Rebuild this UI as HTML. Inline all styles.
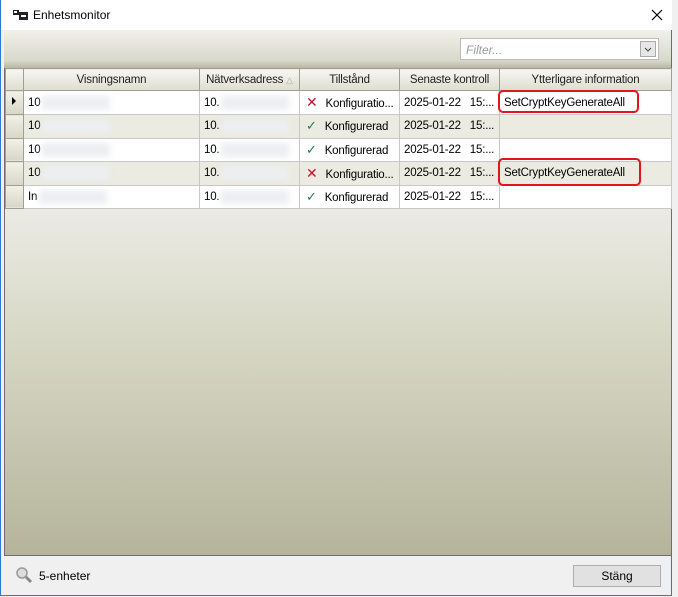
<!DOCTYPE html>
<html><head><meta charset="utf-8"><style>
*{margin:0;padding:0;box-sizing:border-box}
body{width:678px;height:597px;background:#f0f0f0;font-family:"Liberation Sans",sans-serif;font-size:12px;position:relative;overflow:hidden}
#win{position:absolute;left:0;top:0;width:672px;height:596px;border:1px solid #2b79d0;border-top:none;background:#f0f0f0}
#title{position:absolute;left:0;top:0;width:671px;height:30px;background:#fff}
#title .t{position:absolute;left:32px;top:8px;font-size:12px;color:#000}
#tb{position:absolute;left:3px;top:30px;width:667px;height:38px;background:linear-gradient(#f2f1ea,#d9d8cc 80%,#b8b7a5)}
#filter{position:absolute;left:459px;top:38px;width:199px;height:22px;background:#fff;border:1px solid #bbb}
#filter i{position:absolute;left:5px;top:4px;color:#999;font-style:italic;font-size:12px}
#filter b{position:absolute;right:2px;top:2px;width:16px;height:16px;background:#e6e6e6;border:1px solid #aaa}
#grid{position:absolute;left:3px;top:68px;width:668px;height:488px;border:1px solid #6e6e6e;border-top:none;background:linear-gradient(#ebebe4 140px,#d9d9c8 260px,#b5b49b)}
table{border-collapse:collapse;position:absolute;left:0;top:0;table-layout:fixed;width:666px}
td,th{height:23.5px;border:1px solid #c8c8c8;white-space:nowrap;overflow:hidden;font-weight:normal;padding:0 4px;font-size:11.5px;letter-spacing:-0.2px}
th{height:22px;background:linear-gradient(#f7f7f2,#deddd0);border-color:#a0a090;text-align:center;color:#222}
td.rh{background:linear-gradient(#f2f1e8,#d8d6c6);border-color:#a0a090;padding:0}
tr.a td{background:#fff}tr.b td{background:#ebebe1}
tr td.rh{background:linear-gradient(#f2f1e8,#d8d6c6)}
.blur{display:inline-block;width:68px;height:14px;background:#eceef1;filter:blur(3px);vertical-align:middle;margin-left:2px}
.x{color:#c8102e;font-size:14px;margin:0 8px 0 2px}
.c{color:#1e7a50;font-size:13px;margin:0 8px 0 2px}
.red{position:absolute;border:2px solid #e2141e;border-radius:5px}
#foot{position:absolute;left:38px;top:569px;font-size:12px}
#btn{position:absolute;left:572px;top:565px;width:88px;height:22px;background:#e1e1e1;border:1px solid #adadad;text-align:center;line-height:20px;font-size:12px}
</style></head><body>
<div id="win">
<div id="title">
<svg style="position:absolute;left:12px;top:10px" width="16" height="11"><rect x="0" y="0" width="6" height="5" fill="#222"/><rect x="1" y="1" width="3" height="2" fill="#fff"/><rect x="6" y="2" width="9" height="8" fill="#222"/><rect x="8" y="5" width="5" height="2" fill="#fff"/></svg>
<span class="t">Enhetsmonitor</span>
<svg style="position:absolute;left:650px;top:9px" width="12" height="12"><path d="M1 1L11 11M11 1L1 11" stroke="#000" stroke-width="1.2"/></svg>
</div>
<div id="tb"></div>
<div id="filter"><i>Filter...</i><b><svg width="14" height="14"><path d="M4 6l3 3 3-3" stroke="#444" fill="none"/></svg></b></div>
<div id="grid">
<table>
<colgroup><col style="width:18px"><col style="width:176px"><col style="width:100px"><col style="width:100px"><col style="width:100px"><col style="width:172px"></colgroup>
<tr><th style="padding:0"></th><th>Visningsnamn</th><th>Nätverksadress <span style="color:#aaa;font-size:9px">△</span></th><th>Tillstånd</th><th>Senaste kontroll</th><th>Ytterligare information</th></tr>
<tr class="a"><td class="rh"><svg width="16" height="20"><path d="M6 6l4 4-4 4z" fill="#000"/></svg></td><td style="border:1px dotted #000">10<span class="blur"></span></td><td>10.<span class="blur"></span></td><td><span class="x">✕</span>Konfiguratio...</td><td>2025-01-22 &nbsp; 15:...</td><td>SetCryptKeyGenerateAll</td></tr>
<tr class="b"><td class="rh"></td><td>10<span class="blur"></span></td><td>10.<span class="blur"></span></td><td><span class="c">✓</span>Konfigurerad</td><td>2025-01-22 &nbsp; 15:...</td><td></td></tr>
<tr class="a"><td class="rh"></td><td>10<span class="blur"></span></td><td>10.<span class="blur"></span></td><td><span class="c">✓</span>Konfigurerad</td><td>2025-01-22 &nbsp; 15:...</td><td></td></tr>
<tr class="b"><td class="rh"></td><td>10<span class="blur"></span></td><td>10.<span class="blur"></span></td><td><span class="x">✕</span>Konfiguratio...</td><td>2025-01-22 &nbsp; 15:...</td><td>SetCryptKeyGenerateAll</td></tr>
<tr class="a"><td class="rh"></td><td>In<span class="blur"></span></td><td>10.<span class="blur"></span></td><td><span class="c">✓</span>Konfigurerad</td><td>2025-01-22 &nbsp; 15:...</td><td></td></tr>
</table>
</div>
<div class="red" style="left:497px;top:90px;width:141px;height:23px"></div>
<div class="red" style="left:497px;top:158px;width:143px;height:28px"></div>
<svg style="position:absolute;left:14px;top:566px" width="18" height="18"><circle cx="7" cy="7" r="5" fill="#ddd" stroke="#999" stroke-width="1.5"/><path d="M11 11l5 5" stroke="#888" stroke-width="3"/></svg>
<div id="foot">5-enheter</div>
<div id="btn">Stäng</div>
</div>
</body></html>
